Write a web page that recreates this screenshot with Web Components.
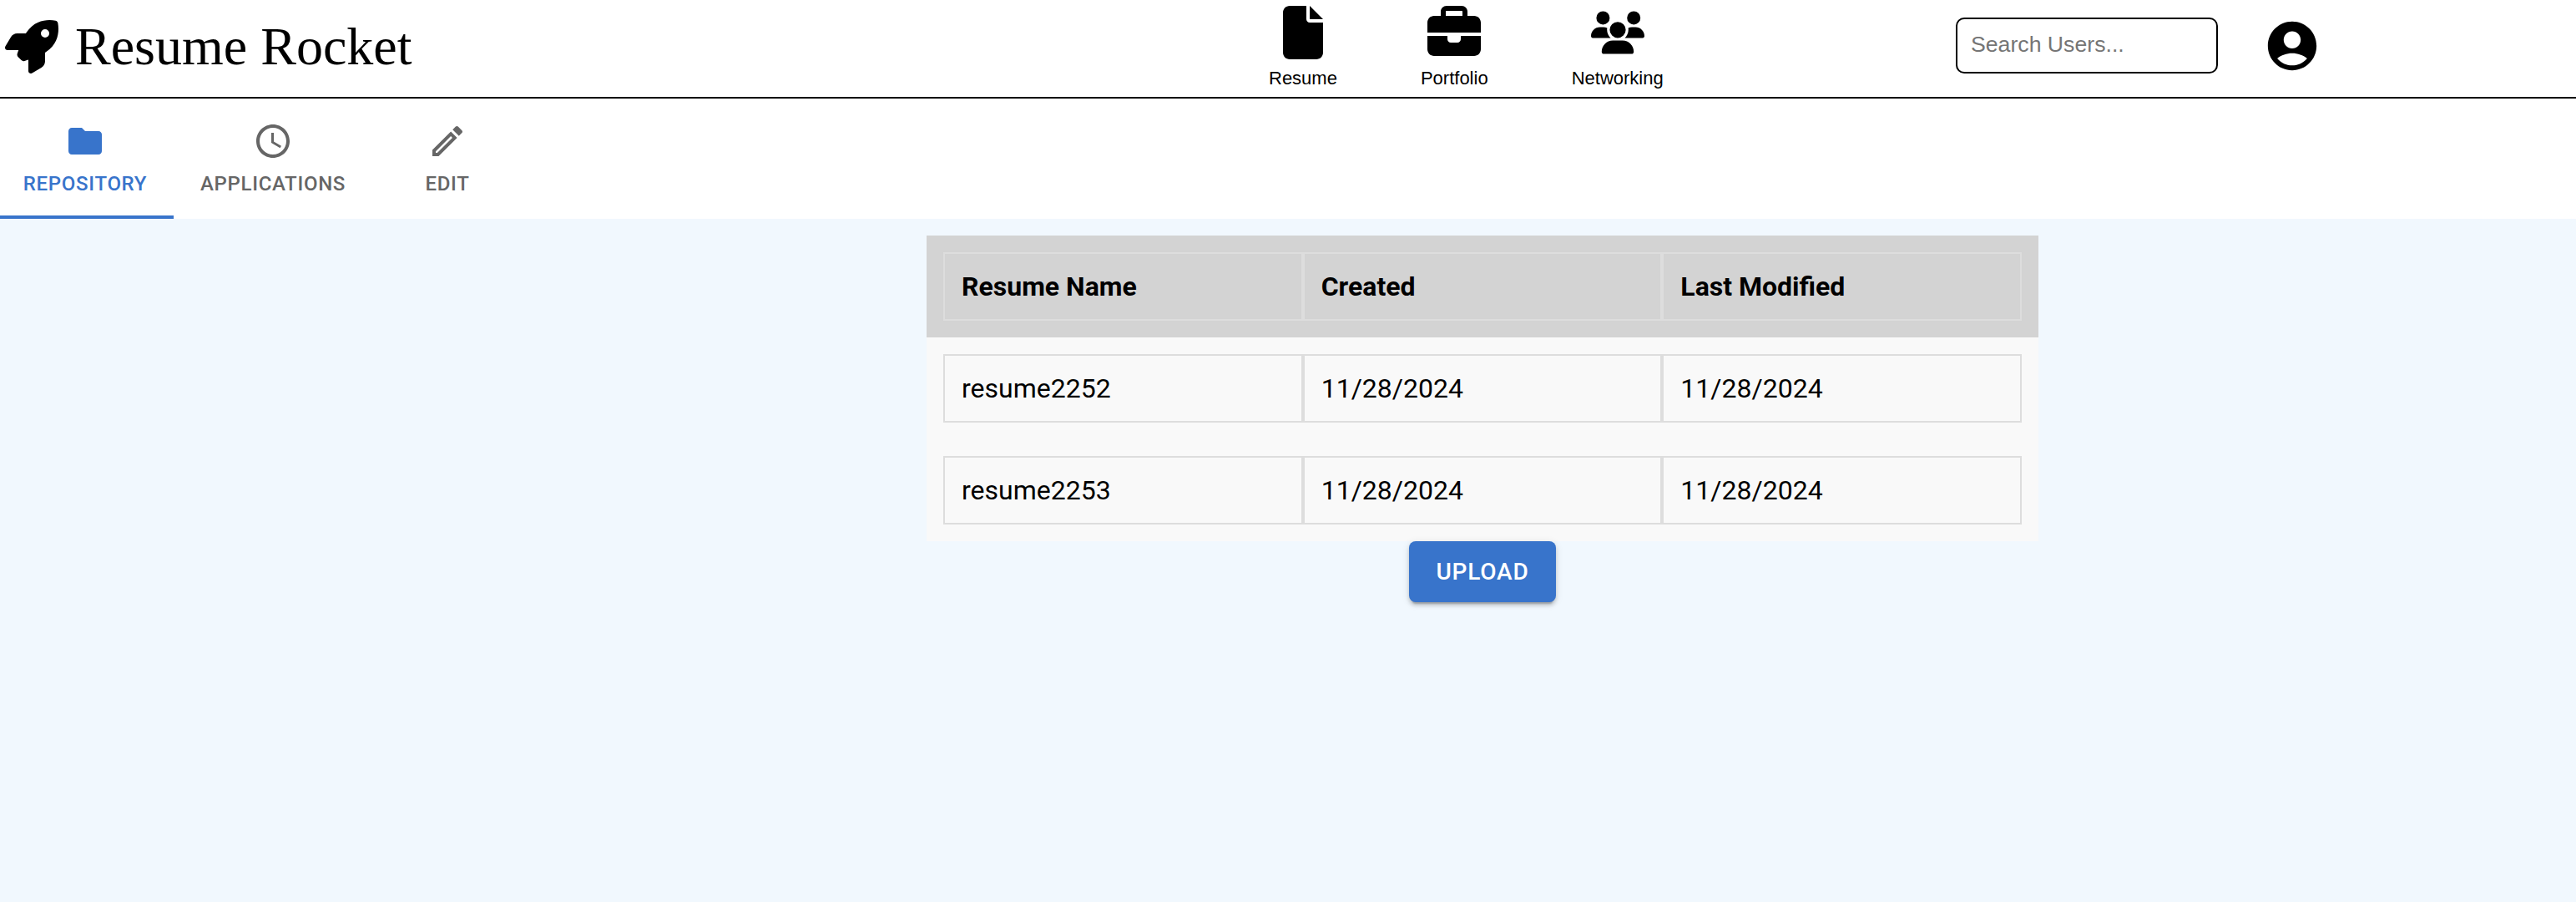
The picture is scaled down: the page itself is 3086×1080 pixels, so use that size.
<!DOCTYPE html>
<html lang="en">
<head>
<meta charset="utf-8">
<title>Resume Rocket</title>
<style>
html, body { margin: 0; height: 100%; }
body { background: #f1f8fe; color: #000; overflow: hidden; font-family: Roboto, sans-serif; }
</style>
</head>
<body>
<resume-app></resume-app>
<script>
const ICONS = {
  rocket: ['0 0 512 512', 'M156.6 384.9L125.7 354c-8.5-8.5-11.5-20.8-7.7-32.2c3-8.9 7-20.5 11.8-33.8L24 288c-8.6 0-16.6-4.6-20.9-12.1s-4.2-16.7 .2-24.1l52.5-88.5c13-21.9 36.5-35.3 61.9-35.3l82.3 0c2.4-4 4.8-7.7 7.2-11.3C289.1-4.1 411.1-8.1 483.9 5.3c11.6 2.1 20.6 11.2 22.8 22.8c13.4 72.9 9.3 194.8-111.4 276.7c-3.5 2.4-7.3 4.8-11.3 7.2l0 82.3c0 25.4-13.4 49-35.3 61.9l-88.5 52.5c-7.4 4.4-16.6 4.5-24.1 .2s-12.1-12.2-12.1-20.9l0-107.2c-14.1 4.9-26.4 8.9-35.7 11.9c-11.2 3.6-23.4 .5-31.8-7.8zM384 168a40 40 0 1 0 0-80 40 40 0 1 0 0 80z'],
  file: ['0 0 384 512', 'M0 64C0 28.7 28.7 0 64 0L224 0l0 128c0 17.7 14.3 32 32 32l128 0 0 288c0 35.3-28.7 64-64 64L64 512c-35.3 0-64-28.7-64-64L0 64zm384 64l-128 0L256 0 384 128z'],
  briefcase: ['0 0 512 512', 'M184 48l144 0c4.4 0 8 3.6 8 8l0 40L176 96l0-40c0-4.4 3.6-8 8-8zm-56 8l0 40L64 96C28.7 96 0 124.7 0 160l0 96 192 0 128 0 192 0 0-96c0-35.3-28.7-64-64-64l-64 0 0-40c0-30.9-25.1-56-56-56L184 0c-30.9 0-56 25.1-56 56zM512 288l-192 0 0 32c0 17.7-14.3 32-32 32l-64 0c-17.7 0-32-14.3-32-32l0-32L0 288 0 416c0 35.3 28.7 64 64 64l384 0c35.3 0 64-28.7 64-64l0-128z'],
  users: ['0 0 640 512', 'M144 0a80 80 0 1 1 0 160A80 80 0 1 1 144 0zM512 0a80 80 0 1 1 0 160A80 80 0 1 1 512 0zM0 298.7C0 239.8 47.8 192 106.7 192l42.7 0c15.9 0 31 3.5 44.6 9.7c-1.3 7.2-1.9 14.7-1.9 22.3c0 38.2 16.8 72.5 43.3 96c-.2 0-.4 0-.7 0L21.3 320C9.6 320 0 310.4 0 298.7zM405.3 320c-.2 0-.4 0-.7 0c26.6-23.5 43.3-57.8 43.3-96c0-7.6-.7-15-1.9-22.3c13.6-6.3 28.7-9.7 44.6-9.7l42.7 0C592.2 192 640 239.8 640 298.7c0 11.8-9.6 21.3-21.3 21.3l-213.3 0zM224 224a96 96 0 1 1 192 0 96 96 0 1 1 -192 0zM128 485.3C128 411.7 187.7 352 261.3 352l117.3 0C452.3 352 512 411.7 512 485.3c0 14.7-11.9 26.7-26.7 26.7l-330.7 0c-14.7 0-26.7-11.9-26.7-26.7z'],
  account: ['0 0 24 24', 'M12 2C6.48 2 2 6.48 2 12s4.48 10 10 10 10-4.48 10-10S17.52 2 12 2m0 4c1.93 0 3.5 1.57 3.5 3.5S13.93 13 12 13s-3.5-1.57-3.5-3.5S10.07 6 12 6m0 14c-2.03 0-4.43-.82-6.14-2.88C7.55 15.8 9.68 15 12 15s4.45.8 6.14 2.12C16.43 19.18 14.03 20 12 20'],
  folder: ['0 0 24 24', 'M10 4H4c-1.1 0-1.99.9-1.99 2L2 18c0 1.1.9 2 2 2h16c1.1 0 2-.9 2-2V8c0-1.1-.9-2-2-2h-8z'],
  clock: ['0 0 24 24', 'M11.99 2C6.47 2 2 6.48 2 12s4.47 10 9.99 10C17.52 22 22 17.52 22 12S17.52 2 11.99 2M12 20c-4.42 0-8-3.58-8-8s3.58-8 8-8 8 3.58 8 8-3.58 8-8 8M12.5 7H11v6l5.25 3.15.75-1.23-4.5-2.67z'],
  pencil: ['0 0 24 24', 'm14.06 9.02.92.92L5.92 19H5v-.92zM17.66 3c-.25 0-.51.1-.7.29l-1.83 1.83 3.75 3.75 1.83-1.83c.39-.39.39-1.02 0-1.41l-2.34-2.34c-.2-.2-.45-.29-.71-.29m-3.6 3.19L3 17.25V21h3.75L17.81 9.94z']
};

function define(name, html) {
  const template = document.createElement('template');
  template.innerHTML = html;
  customElements.define(name, class extends HTMLElement {
    constructor() {
      super();
      this.attachShadow({ mode: 'open' }).append(template.content.cloneNode(true));
    }
  });
}

customElements.define('app-icon', class extends HTMLElement {
  connectedCallback() {
    if (this.shadowRoot) return;
    const [box, path] = ICONS[this.getAttribute('name')];
    this.attachShadow({ mode: 'open' }).innerHTML = `
      <style>
        :host { display: block; flex: none; width: var(--size, 64px); height: var(--size, 64px); }
        svg { display: block; width: 100%; height: 100%; fill: currentColor; }
      </style>
      <svg viewBox="${box}" aria-hidden="true"><path fill-rule="evenodd" d="${path}"/></svg>`;
  }
});

define('nav-link', `
  <style>
    :host { display: flex; flex-direction: column; align-items: center; font: 22px/26px "Liberation Sans", Arial, sans-serif; }
    span { margin-top: 10px; white-space: nowrap; }
  </style>
  <slot name="icon"></slot><span><slot></slot></span>`);

define('search-box', `
  <style>
    :host { display: block; width: 314px; height: 67px; margin-bottom: 1px; }
    input { box-sizing: border-box; display: block; width: 100%; height: 100%; margin: 0; padding: 0 16px 2px; border: 2px solid #000; border-radius: 10px; background: #fff; font: 26.667px "Liberation Sans", Arial, sans-serif; outline: none; }
    input::placeholder { color: #757575; opacity: 1; }
  </style>
  <input type="text" placeholder="Search Users...">`);

define('app-header', `
  <style>
    :host { box-sizing: border-box; display: flex; align-items: flex-start; height: 118px; background: #fff; border-bottom: 2px solid #000; }
    .brand { box-sizing: border-box; display: flex; align-items: center; gap: 20px; width: 1520px; height: 112px; padding-left: 6px; }
    h1 { margin: 0; font: 400 64px/74px "Liberation Serif", "Times New Roman", serif; }
    nav { display: flex; gap: 100px; padding-top: 7px; width: 823px; }
    .tools { display: flex; align-items: center; gap: 54px; height: 110px; }
    .tools app-icon { --size: 70px; }
  </style>
  <div class="brand"><app-icon name="rocket"></app-icon><h1>Resume Rocket</h1></div>
  <nav>
    <nav-link><app-icon slot="icon" name="file"></app-icon>Resume</nav-link>
    <nav-link><app-icon slot="icon" name="briefcase"></app-icon>Portfolio</nav-link>
    <nav-link><app-icon slot="icon" name="users"></app-icon>Networking</nav-link>
  </nav>
  <div class="tools"><search-box></search-box><app-icon name="account"></app-icon></div>`);

define('tab-item', `
  <style>
    :host { --size: 48px; box-sizing: border-box; display: flex; flex-direction: column; align-items: center; padding-top: 27px; height: 144px; color: #666; font: 500 24px/32px Roboto, sans-serif; letter-spacing: 0.02857em; border-bottom: 4px solid transparent; }
    :host([selected]) { color: #3874cb; border-bottom-color: #3874cb; }
    span { margin-top: 11px; text-transform: uppercase; white-space: nowrap; }
  </style>
  <slot name="icon"></slot><span><slot></slot></span>`);

define('tab-bar', `
  <style>
    :host { display: flex; height: 144px; background: #fff; }
    .repo { width: 208px; padding-right: 4px; }
    .apps { width: 238px; }
    .edit { width: 180px; }
  </style>
  <tab-item class="repo" selected><app-icon slot="icon" name="folder"></app-icon>Repository</tab-item>
  <tab-item class="apps"><app-icon slot="icon" name="clock"></app-icon>Applications</tab-item>
  <tab-item class="edit"><app-icon slot="icon" name="pencil"></app-icon>Edit</tab-item>`);

define('table-cell', `
  <style>
    :host { box-sizing: border-box; display: block; flex: 1 1 0; height: 82px; padding: 20px; border: 2px solid #ddd; line-height: 38px; }
  </style>
  <slot></slot>`);

define('table-row', `
  <style>
    :host { box-sizing: border-box; display: flex; height: 122px; padding: 20px; background: #f9f9f9; font-size: 32px; }
    :host([head]) { background: #d3d3d3; font-weight: 700; }
  </style>
  <slot></slot>`);

define('resume-table', `
  <style>:host { display: flex; flex-direction: column; width: 1332px; }</style>
  <table-row head><table-cell>Resume Name</table-cell><table-cell>Created</table-cell><table-cell>Last Modified</table-cell></table-row>
  <table-row><table-cell>resume2252</table-cell><table-cell>11/28/2024</table-cell><table-cell>11/28/2024</table-cell></table-row>
  <table-row><table-cell>resume2253</table-cell><table-cell>11/28/2024</table-cell><table-cell>11/28/2024</table-cell></table-row>`);

define('upload-button', `
  <style>
    :host { display: block; }
    button { display: block; width: 176px; height: 73px; margin: 0; padding: 0; border: 0; border-radius: 8px; background: #3874cb; color: #fff; font: 500 28px/49px Roboto, sans-serif; letter-spacing: 0.02857em; text-transform: uppercase; box-shadow: 0 6px 2px -4px rgba(0,0,0,.2), 0 4px 4px 0 rgba(0,0,0,.14), 0 2px 10px 0 rgba(0,0,0,.12); }
  </style>
  <button type="button"><slot></slot></button>`);

define('resume-app', `
  <style>
    :host { display: flex; flex-direction: column; height: 100%; }
    main { display: flex; flex-direction: column; align-items: center; width: 1332px; padding: 20px 0 0 1110px; }
  </style>
  <app-header></app-header>
  <tab-bar></tab-bar>
  <main><resume-table></resume-table><upload-button>Upload</upload-button></main>`);
</script>
</body>
</html>
